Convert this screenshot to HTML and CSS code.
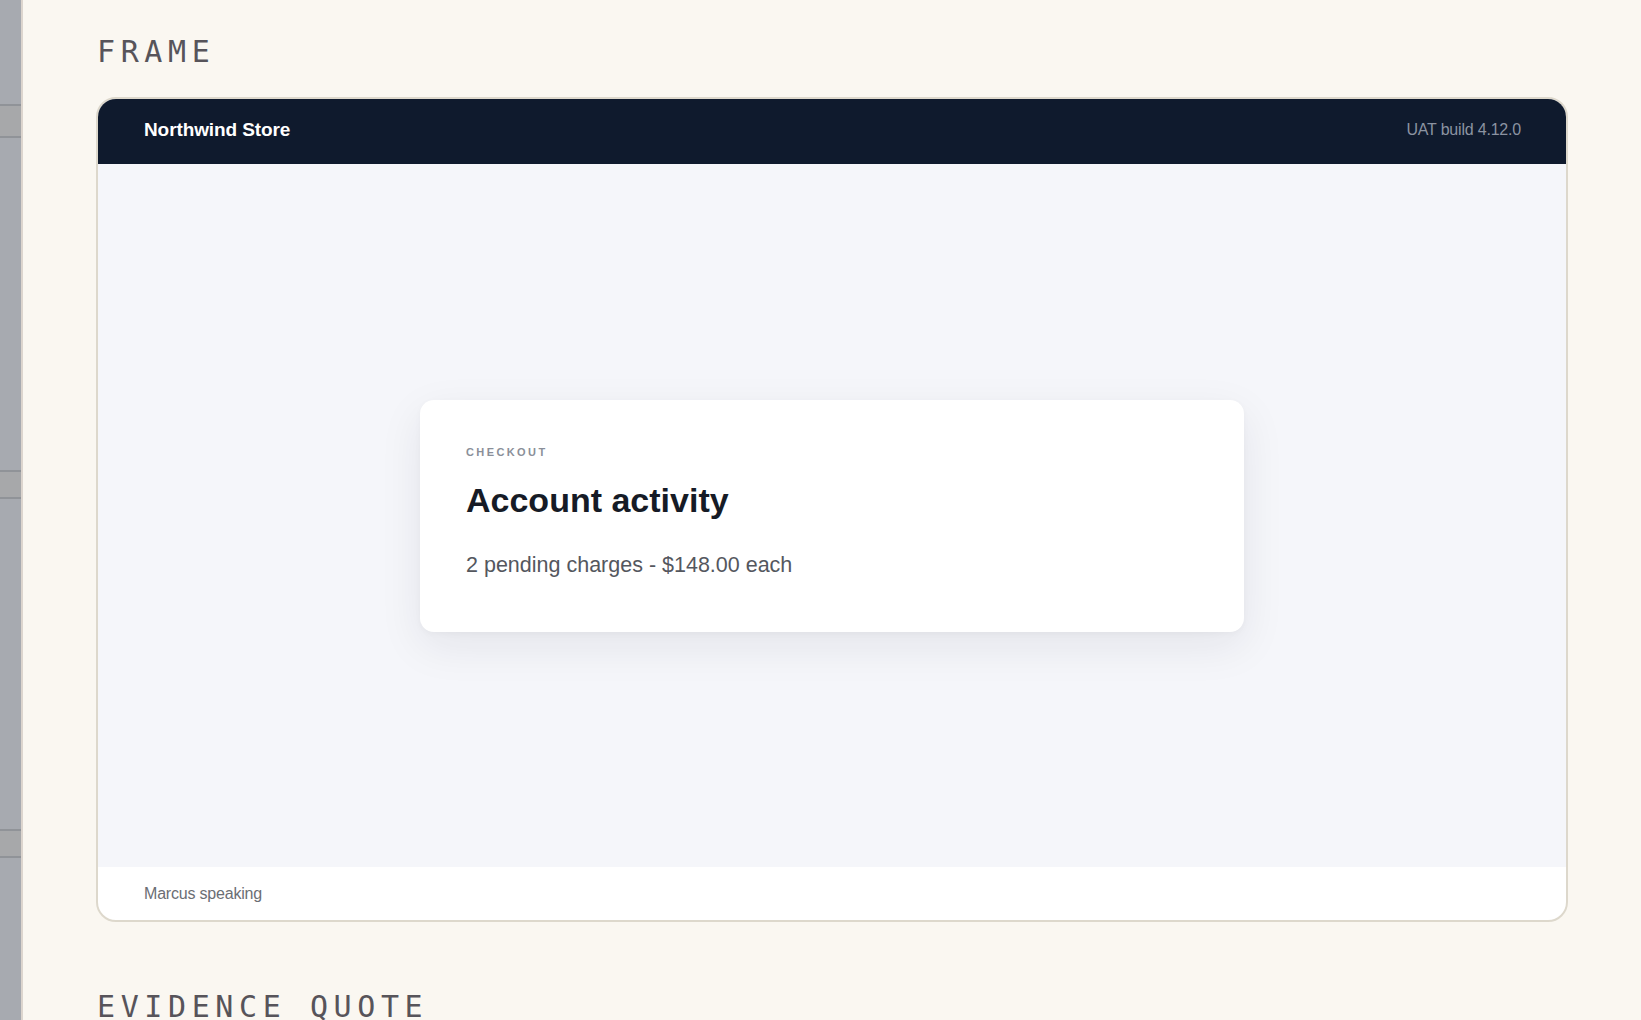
FILE: index.html
```html
<!DOCTYPE html>
<html lang="en">
<head>
<meta charset="utf-8">
<title>Frame</title>
<link rel="stylesheet" href="styles.css">
</head>
<body>
<div class="page">
  <aside class="sidebar">
    <div class="sb-gap sb-gap-top"></div>
    <div class="sb-band sb-band-first"></div>
    <div class="sb-gap sb-gap-mid"></div>
    <div class="sb-band"></div>
    <div class="sb-gap sb-gap-mid2"></div>
    <div class="sb-band"></div>
    <div class="sb-gap sb-gap-rest"></div>
  </aside>
  <main class="main">
    <h2 class="section-title">FRAME</h2>
    <div class="frame">
      <header class="frame-header">
        <span class="brand">Northwind Store</span>
        <span class="build">UAT build 4.12.0</span>
      </header>
      <div class="frame-body">
        <div class="panel">
          <div class="eyebrow">CHECKOUT</div>
          <h1 class="panel-title">Account activity</h1>
          <p class="panel-text">2 pending charges - $148.00 each</p>
        </div>
      </div>
      <footer class="frame-footer">Marcus speaking</footer>
    </div>
    <h2 class="section-title">EVIDENCE QUOTE</h2>
  </main>
</div>
</body>
</html>
```

FILE: styles.css
```css
html, body {
  margin: 0;
  padding: 0;
  height: 100%;
  overflow: hidden;
  background: #faf7f1;
}

.page {
  display: flex;
  min-height: 100%;
}

.sidebar {
  width: 21px;
  flex: 0 0 21px;
  background: #a7aab0;
  border-right: 2px solid #dcd5ce;
  display: flex;
  flex-direction: column;
}

.sb-gap-top { height: 104px; }
.sb-gap-mid { height: 332px; }
.sb-gap-mid2 { height: 330px; }
.sb-gap-rest { flex: 1; }

.sb-band {
  height: 25px;
  background: #a7a8aa;
  border-top: 2px solid #909398;
  border-bottom: 2px solid #909398;
}

.sb-band-first { height: 30px; }

.main {
  flex: 1;
  padding: 34px 73px 0 73px;
}

.section-title {
  margin: 0 0 27px;
  font-family: "DejaVu Sans Mono", "Liberation Mono", monospace;
  font-weight: normal;
  font-size: 30px;
  line-height: 36px;
  letter-spacing: 5.6px;
  color: #57545a;
  padding-left: 1px;
}

.frame {
  border: 2px solid #ddd8cc;
  border-radius: 20px;
  overflow: hidden;
  background: #ffffff;
  margin-bottom: 67px;
  display: flex;
  flex-direction: column;
}

.frame-header {
  height: 65px;
  background: #0f1a2d;
  display: flex;
  align-items: center;
  justify-content: space-between;
  padding: 0 45px 0 46px;
  font-family: "Liberation Sans", Arial, sans-serif;
}

.brand {
  color: #ffffff;
  font-weight: bold;
  font-size: 19px;
  letter-spacing: -0.1px;
  position: relative;
  top: -2px;
}

.build {
  color: #8b93a1;
  font-size: 16px;
  letter-spacing: -0.2px;
  position: relative;
  top: -2px;
}

.frame-body {
  height: 703px;
  background: #f5f6fa;
  display: flex;
  align-items: center;
  justify-content: center;
}

.panel {
  width: 824px;
  box-sizing: border-box;
  background: #ffffff;
  border-radius: 14px;
  padding: 45px 46px 52px;
  box-shadow: 0 14px 44px rgba(20, 28, 45, 0.08), 0 2px 6px rgba(20, 28, 45, 0.03);
  font-family: "Liberation Sans", Arial, sans-serif;
}

.eyebrow {
  font-size: 11px;
  line-height: 14px;
  font-weight: bold;
  letter-spacing: 2.4px;
  color: #8a8f99;
}

.panel-title {
  margin: 21px 0 0;
  font-size: 34px;
  line-height: 41px;
  font-weight: bold;
  color: #161b26;
}

.panel-text {
  margin: 29px 0 0;
  font-size: 21.5px;
  line-height: 30px;
  color: #54575e;
}

.frame-footer {
  height: 53px;
  display: flex;
  align-items: center;
  padding: 0 46px;
  font-family: "Liberation Sans", Arial, sans-serif;
  font-size: 16px;
  color: #6b6e74;
  letter-spacing: -0.2px;
}
```
